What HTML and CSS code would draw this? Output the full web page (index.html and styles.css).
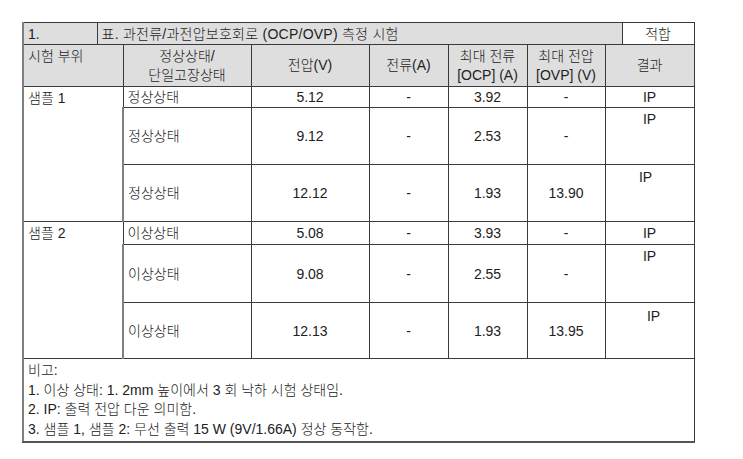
FILE: index.html
```html
<!DOCTYPE html>
<html lang="ko">
<head>
<meta charset="utf-8">
<title>OCP/OVP 측정 시험</title>
<link rel="stylesheet" href="styles.css">
</head>
<body>
<table class="report">
  <colgroup>
    <col class="c1"><col class="c2"><col class="c3"><col class="c4"><col class="c5"><col class="c6"><col class="c7"><col class="c8"><col class="c9">
  </colgroup>
  <tr class="title-row">
    <td class="shade left">1.</td>
    <td class="shade left title" colspan="7">표. 과전류/과전압보호회로 (OCP/OVP) 측정 시험</td>
    <td class="center">적합</td>
  </tr>
  <tr class="head-row">
    <th class="left top" colspan="2">시험 부위</th>
    <th>정상상태/<br>단일고장상태</th>
    <th>전압(V)</th>
    <th>전류(A)</th>
    <th>최대 전류<br>[OCP] (A)</th>
    <th>최대 전압<br>[OVP] (V)</th>
    <th colspan="2">결과</th>
  </tr>
  <tr class="r-short">
    <td class="left top" colspan="2" rowspan="3">샘플 1</td>
    <td class="left">정상상태</td>
    <td class="center">5.12</td>
    <td class="center">-</td>
    <td class="center">3.92</td>
    <td class="center">-</td>
    <td class="center" colspan="2">IP</td>
  </tr>
  <tr class="r-tall">
    <td class="left">정상상태</td>
    <td class="center">9.12</td>
    <td class="center">-</td>
    <td class="center">2.53</td>
    <td class="center">-</td>
    <td class="center ip" colspan="2">IP</td>
  </tr>
  <tr class="r-tall">
    <td class="left">정상상태</td>
    <td class="center">12.12</td>
    <td class="center">-</td>
    <td class="center">1.93</td>
    <td class="center">13.90</td>
    <td class="center ip ip-b" colspan="2">IP</td>
  </tr>
  <tr class="r-short2">
    <td class="left top" colspan="2" rowspan="3">샘플 2</td>
    <td class="left">이상상태</td>
    <td class="center">5.08</td>
    <td class="center">-</td>
    <td class="center">3.93</td>
    <td class="center">-</td>
    <td class="center" colspan="2">IP</td>
  </tr>
  <tr class="r-tall2">
    <td class="left">이상상태</td>
    <td class="center">9.08</td>
    <td class="center">-</td>
    <td class="center">2.55</td>
    <td class="center">-</td>
    <td class="center ip" colspan="2">IP</td>
  </tr>
  <tr class="r-tall3">
    <td class="left">이상상태</td>
    <td class="center">12.13</td>
    <td class="center">-</td>
    <td class="center">1.93</td>
    <td class="center">13.95</td>
    <td class="center ip ip-c" colspan="2">IP</td>
  </tr>
  <tr class="notes-row">
    <td class="left notes" colspan="9">
      <div>비고:</div>
      <div>1. 이상 상태: 1. 2mm 높이에서 3 회 낙하 시험 상태임.</div>
      <div>2. IP: 출력 전압 다운 의미함.</div>
      <div>3. 샘플 1, 샘플 2: 무선 출력 15 W (9V/1.66A) 정상 동작함.</div>
    </td>
  </tr>
</table>
</body>
</html>
```
FILE: styles.css
```css
html, body {
  margin: 0;
  padding: 0;
  background: #ffffff;
}
body {
  padding: 22px 0 0 22px;
  font-family: "Liberation Sans", "Noto Sans CJK KR", Arial, sans-serif;
  font-size: 14px;
  font-weight: 300;
  color: #222222;
}
.report {
  border-collapse: collapse;
  table-layout: fixed;
  width: 672px;
}
.c1 { width: 74px; }
.c2 { width: 26px; }
.c3 { width: 128px; }
.c4 { width: 118px; }
.c5 { width: 79px; }
.c6 { width: 79px; }
.c7 { width: 78px; }
.c8 { width: 17px; }
.c9 { width: 72px; }
.report td, .report th {
  box-sizing: border-box;
  border: 1px solid #3a3a3a;
  padding: 0 4px;
  font-weight: 300;
  line-height: 18px;
  vertical-align: middle;
  text-align: center;
}
.report tr td:first-child, .report tr th:first-child {
  border-left-color: #808080;
  border-left-width: 2px;
}
.report .shade { background: #dedede; }
.report .title { letter-spacing: 0.25px; }
.title-row td { height: 22px; }
.report .head-row th {
  background: #dedede;
  height: 42px;
  line-height: 19px;
}
.report .left { text-align: left; }
.report .center { text-align: center; }
.report .top { vertical-align: top; padding-top: 2px; }
.r-short td { height: 21px; }
.r-tall td { height: 57px; }
.r-short2 td { height: 23px; }
.r-tall2 td { height: 58px; }
.r-tall3 td { height: 56px; }
.report .ip { vertical-align: top; padding-top: 2px; }
.report .ip-b { padding-top: 3px; padding-right: 12px; }
.report .ip-c { padding-top: 4px; padding-left: 12px; }
.report .notes {
  vertical-align: top;
  padding: 2px 4px 2px 4px;
  height: 83px;
  border-bottom-color: #555;
  border-bottom-width: 2px;
}
.notes div { line-height: 19.5px; }
```
